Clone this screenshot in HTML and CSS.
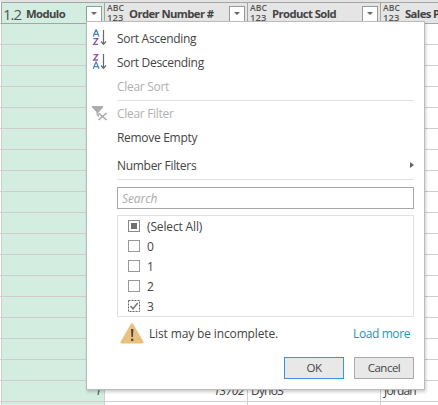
FILE: index.html
```
<!DOCTYPE html>
<html lang="en">
<head>
<meta charset="utf-8">
<title>Column filter</title>
<link rel="stylesheet" href="styles.css">
</head>
<body>
<div class="grid">
  <div class="cell head key"><span class="type decimal">1.2</span><span class="name">Modulo</span><span class="drop"></span></div>
  <div class="cell head"><span class="type any"><span>ABC</span><span>123</span></span><span class="name">Order Number #</span><span class="drop"></span></div>
  <div class="cell head"><span class="type any"><span>ABC</span><span>123</span></span><span class="name">Product Sold</span><span class="drop"></span></div>
  <div class="cell head"><span class="type any"><span>ABC</span><span>123</span></span><span class="name">Sales P</span></div>
  <div class="cell key"></div><div class="cell"></div><div class="cell"></div><div class="cell"></div>
  <div class="cell key"></div><div class="cell"></div><div class="cell"></div><div class="cell"></div>
  <div class="cell key"></div><div class="cell"></div><div class="cell"></div><div class="cell"></div>
  <div class="cell key"></div><div class="cell"></div><div class="cell"></div><div class="cell"></div>
  <div class="cell key"></div><div class="cell"></div><div class="cell"></div><div class="cell"></div>
  <div class="cell key"></div><div class="cell"></div><div class="cell"></div><div class="cell"></div>
  <div class="cell key"></div><div class="cell"></div><div class="cell"></div><div class="cell"></div>
  <div class="cell key"></div><div class="cell"></div><div class="cell"></div><div class="cell"></div>
  <div class="cell key"></div><div class="cell"></div><div class="cell"></div><div class="cell"></div>
  <div class="cell key"></div><div class="cell"></div><div class="cell"></div><div class="cell"></div>
  <div class="cell key"></div><div class="cell"></div><div class="cell"></div><div class="cell"></div>
  <div class="cell key"></div><div class="cell"></div><div class="cell"></div><div class="cell"></div>
  <div class="cell key"></div><div class="cell"></div><div class="cell"></div><div class="cell"></div>
  <div class="cell key"></div><div class="cell"></div><div class="cell"></div><div class="cell"></div>
  <div class="cell key"></div><div class="cell"></div><div class="cell"></div><div class="cell"></div>
  <div class="cell key"></div><div class="cell"></div><div class="cell"></div><div class="cell"></div>
  <div class="cell key"></div><div class="cell"></div><div class="cell"></div><div class="cell"></div>
  <div class="cell key num">1</div><div class="cell num">13702</div><div class="cell">Dyno3</div><div class="cell">Jordan</div>
  <div class="cell key"></div><div class="cell"></div><div class="cell"></div><div class="cell"></div>
</div>

<div class="menu">
  <div class="item">
    <svg class="icon" width="16" height="18" viewBox="0 0 16 18" fill="none"><path d="M1.2 7.5 3.9.8h.4L7 7.5M2.2 5.3H6" stroke="#4a84bd" stroke-width="1.3"/><path d="M1.5 9.7h4.2L1.7 15.3h4.3" stroke="#8d55ab" stroke-width="1.3"/><path d="M11.5 1v14M9 12.5l2.5 2.8 2.5-2.8" stroke="#686868" stroke-width="1.2"/></svg>
    <span class="label">Sort Ascending</span>
  </div>
  <div class="item">
    <svg class="icon" width="16" height="18" viewBox="0 0 16 18" fill="none"><path d="M1.5 1.7h4.2L1.7 7h4.3" stroke="#8d55ab" stroke-width="1.3"/><path d="M1.2 15.8 3.9 9.1h.4L7 15.8M2.2 13.6H6" stroke="#4a84bd" stroke-width="1.3"/><path d="M11.5 1v14M9 12.5l2.5 2.8 2.5-2.8" stroke="#686868" stroke-width="1.2"/></svg>
    <span class="label">Sort Descending</span>
  </div>
  <div class="item off"><span class="icon"></span><span class="label">Clear Sort</span></div>
  <div class="rule"></div>
  <div class="item off">
    <svg class="icon" width="16" height="18" viewBox="0 0 16 18" fill="none"><path d="M0 2h11v1.5L7 8v5L4.5 11V8L0 3.5z" fill="#acacac"/><path d="m6.5 8.5 8 7.5M14.5 8.5l-8 7.5" stroke="#fff" stroke-width="3"/><path d="m6.5 9 8 7M14.5 9l-8 7" stroke="#a5a5a5" stroke-width="1.4"/></svg>
    <span class="label">Clear Filter</span>
  </div>
  <div class="item remove"><span class="icon"></span><span class="label">Remove Empty</span></div>
  <div class="item"><span class="icon"></span><span class="label">Number Filters</span><svg class="more" width="4" height="6" viewBox="0 0 4 6"><path d="M0 0v6l4-3z" fill="#666"/></svg></div>
  <div class="rule"></div>
  <div class="search">Search</div>
  <div class="list">
    <div class="option"><span class="box some"></span><span class="text">(Select All)</span></div>
    <div class="option"><span class="box"></span><span class="text">0</span></div>
    <div class="option"><span class="box"></span><span class="text">1</span></div>
    <div class="option"><span class="box"></span><span class="text">2</span></div>
    <div class="option"><svg width="12" height="12" viewBox="0 0 12 12" fill="none"><path d="M.5.5h11v11H.5z" stroke="#666" stroke-dasharray="2 1"/><path d="m2.5 6 2.5 2.7L9.7 3" stroke="#787878" stroke-width="1.6"/></svg><span class="text">3</span></div>
  </div>
  <div class="notice">
    <svg width="24" height="21" viewBox="0 0 24 21"><path d="M11 .8q1-1.3 2 0l10.5 18q.5 1.7-1 1.7h-21q-1.5 0-1-1.7z" fill="#e8c080"/><path d="M11 6h2.4l-.5 8h-1.4zM11.1 15.8h2.2v2.2h-2.2z" fill="#474340"/></svg>
    <span class="incomplete">List may be incomplete.</span>
    <span class="load">Load more</span>
  </div>
  <div class="actions"><span class="button primary">OK</span><span class="button">Cancel</span></div>
</div>
</body>
</html>
```
FILE: styles.css
```
* { box-sizing: border-box; }
body {
  margin: 0;
  width: 438px;
  height: 405px;
  overflow: hidden;
  position: relative;
  background: #e3e3e3;
  color: #444;
  font: 12px/16px "Open Sans", "Noto Sans", sans-serif;
  white-space: nowrap;
}
.grid {
  display: grid;
  grid-template-columns: 103px 143px 133px 58px;
  grid-template-rows: 22px;
  grid-auto-rows: 21px;
  margin-top: 2px;
  padding-left: 1px;
  background: repeating-linear-gradient(#fff 0 20px, #d0cdd0 20px 21px) 0 1px;
}
.cell {
  border-left: 1px solid #cfcfcf;
  border-bottom: 1px solid #d0cdd0;
  padding: 0 3px;
  line-height: 20px;
  letter-spacing: -.8px;
  background: #fff;
}
.key { background: #d3eee0; }
.num { text-align: right; font-style: italic; letter-spacing: -.5px; }
.head {
  display: flex;
  align-items: center;
  background: #e5e5e5;
  border-color: #a5a5a5;
  border-top: 1px solid #a5a5a5;
  padding: 1px 2px 0;
  font-weight: 700;
  font-size: 11.3px;
  letter-spacing: -.6px;
}
.head.key { background: #d3eee0; }
.type { flex: none; color: #555; letter-spacing: 0; }
.decimal { font-size: 15px; font-weight: 400; width: 22px; letter-spacing: -1px; margin-left: -1px; margin-right: 1px; }
.any { display: flex; flex-direction: column; width: 22px; margin-top: -2px; font-size: 8.6px; font-weight: 600; line-height: 9px; letter-spacing: .1px; }
.any span + span { font-size: 9.4px; }
.name { flex: 1; min-width: 0; }
.drop {
  flex: none;
  width: 16px;
  height: 16px;
  border: 1px solid #999;
  background: #fff;
  display: flex;
  align-items: center;
  justify-content: center;
}
.drop::after {
  content: "";
  border: 3px solid transparent;
  border-top-color: #666;
  border-bottom: 0;
}
.menu {
  position: absolute;
  left: 86px;
  top: 21px;
  width: 339px;
  height: 369px;
  padding: 4px 10px 0 5px;
  background: #fff;
  border: 1px solid #bcbcbc;
  box-shadow: 1px 2px 3px rgba(0, 0, 0, .2);
}
.item { display: flex; align-items: center; height: 24px; }
.icon { width: 16px; height: 18px; flex: none; margin-right: 9px; }
.label { padding-top: 1px; letter-spacing: -.3px; }
.off { color: #b0b0b0; }
.rule { height: 1px; margin: 2px 0 0 25px; background: #e1e1e1; }
.remove { margin-bottom: 4px; }
.more { margin-left: auto; }
.search {
  height: 22px;
  margin: 7px 0 0 25px;
  padding: 3px 4px;
  border: 1px solid #a7a7a7;
  color: #aaa;
  font-style: italic;
  letter-spacing: -.1px;
}
.list {
  height: 102px;
  margin: 6px 0 0 25px;
  border: 1px solid #e1e1e1;
  padding: 0 10px;
}
.option { display: flex; align-items: center; height: 20px; gap: 7px; letter-spacing: -.15px; }
.text { padding-top: 2px; }
.box { width: 12px; height: 12px; border: 1px solid #999; }
.some { background: #6f6f6f; border-color: #888; box-shadow: inset 0 0 0 2px #fff; }
.notice { display: flex; align-items: center; height: 21px; margin: 6px 0 0 28px; }
.incomplete { margin-left: 5px; letter-spacing: -.14px; }
.load { margin-left: auto; margin-right: 4px; color: #2496b4; letter-spacing: -.4px; }
.actions { display: flex; justify-content: flex-end; gap: 10px; margin-top: 13px; }
.button {
  width: 60px;
  height: 22px;
  border: 1px solid #aaa;
  background: #e8e8e8;
  text-align: center;
  line-height: 20px;
  font-size: 11.5px;
  letter-spacing: -.5px;
}
.primary { border-color: #3a94e0; }
```
